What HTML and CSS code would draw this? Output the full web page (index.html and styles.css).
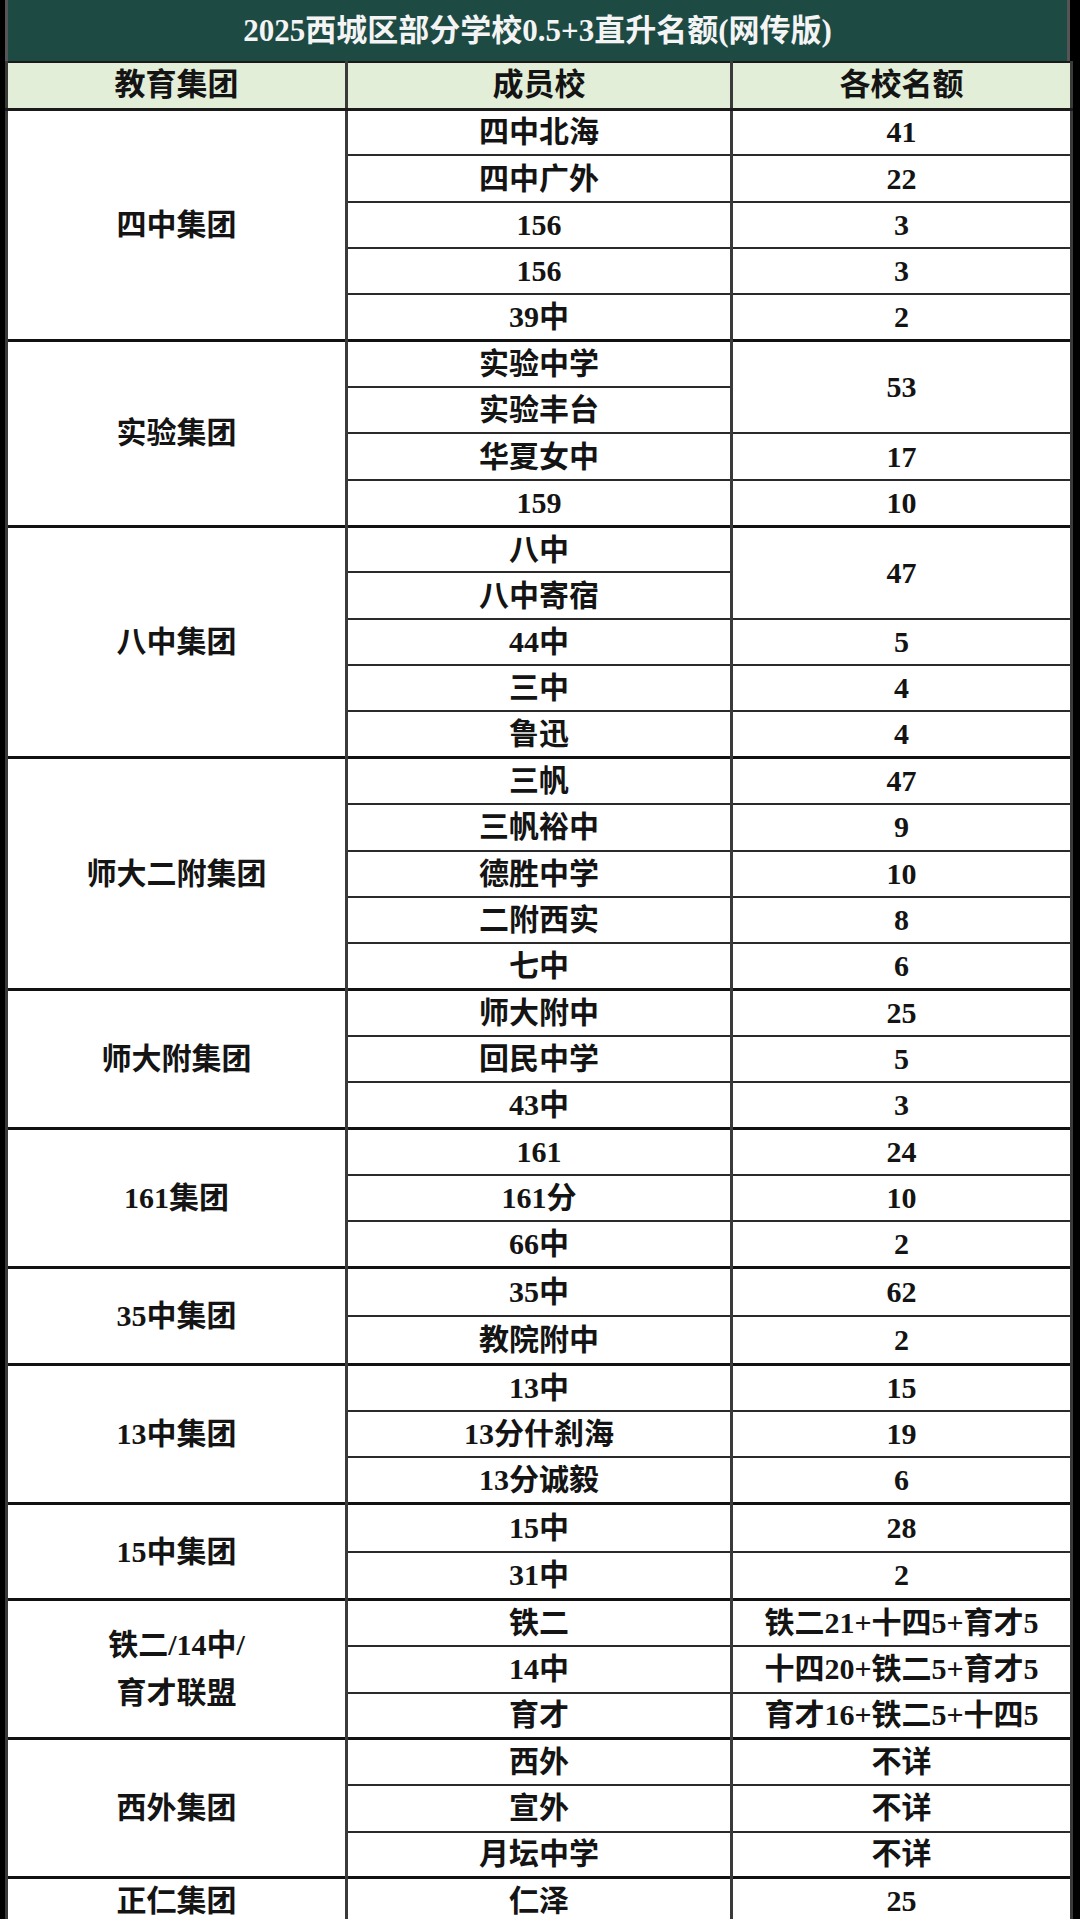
FILE: index.html
```html
<!DOCTYPE html>
<html lang="zh-CN">
<head>
<meta charset="utf-8">
<title>2025西城区部分学校0.5+3直升名额(网传版)</title>
<link rel="stylesheet" href="styles.css">
</head>
<body>
<div class="sheet">
  <div class="title">2025西城区部分学校0.5+3直升名额(网传版)</div>
  <table class="quota">
    <colgroup>
      <col class="c1"><col class="c2"><col class="c3">
    </colgroup>
    <thead>
      <tr class="head"><th>教育集团</th><th>成员校</th><th>各校名额</th></tr>
    </thead>
    <tbody>
      <tr class="g"><td rowspan="5">四中集团</td><td>四中北海</td><td>41</td></tr>
      <tr><td>四中广外</td><td>22</td></tr>
      <tr><td>156</td><td>3</td></tr>
      <tr><td>156</td><td>3</td></tr>
      <tr><td>39中</td><td>2</td></tr>

      <tr class="g"><td rowspan="4">实验集团</td><td>实验中学</td><td rowspan="2">53</td></tr>
      <tr><td>实验丰台</td></tr>
      <tr><td>华夏女中</td><td>17</td></tr>
      <tr><td>159</td><td>10</td></tr>

      <tr class="g"><td rowspan="5">八中集团</td><td>八中</td><td rowspan="2">47</td></tr>
      <tr><td>八中寄宿</td></tr>
      <tr><td>44中</td><td>5</td></tr>
      <tr><td>三中</td><td>4</td></tr>
      <tr><td>鲁迅</td><td>4</td></tr>

      <tr class="g"><td rowspan="5">师大二附集团</td><td>三帆</td><td>47</td></tr>
      <tr><td>三帆裕中</td><td>9</td></tr>
      <tr><td>德胜中学</td><td>10</td></tr>
      <tr><td>二附西实</td><td>8</td></tr>
      <tr><td>七中</td><td>6</td></tr>

      <tr class="g"><td rowspan="3">师大附集团</td><td>师大附中</td><td>25</td></tr>
      <tr><td>回民中学</td><td>5</td></tr>
      <tr><td>43中</td><td>3</td></tr>

      <tr class="g"><td rowspan="3">161集团</td><td>161</td><td>24</td></tr>
      <tr><td>161分</td><td>10</td></tr>
      <tr><td>66中</td><td>2</td></tr>

      <tr class="g tall"><td rowspan="2">35中集团</td><td>35中</td><td>62</td></tr>
      <tr class="tall"><td>教院附中</td><td>2</td></tr>

      <tr class="g"><td rowspan="3">13中集团</td><td>13中</td><td>15</td></tr>
      <tr><td>13分什刹海</td><td>19</td></tr>
      <tr><td>13分诚毅</td><td>6</td></tr>

      <tr class="g tall"><td rowspan="2">15中集团</td><td>15中</td><td>28</td></tr>
      <tr class="tall"><td>31中</td><td>2</td></tr>

      <tr class="g"><td rowspan="3" class="multi">铁二/14中/<br>育才联盟</td><td>铁二</td><td>铁二21+十四5+育才5</td></tr>
      <tr><td>14中</td><td>十四20+铁二5+育才5</td></tr>
      <tr><td>育才</td><td>育才16+铁二5+十四5</td></tr>

      <tr class="g"><td rowspan="3">西外集团</td><td>西外</td><td>不详</td></tr>
      <tr><td>宣外</td><td>不详</td></tr>
      <tr><td>月坛中学</td><td>不详</td></tr>

      <tr class="g"><td>正仁集团</td><td>仁泽</td><td>25</td></tr>
    </tbody>
  </table>
</div>
</body>
</html>
```
FILE: styles.css
```css
html, body {
  margin: 0;
  padding: 0;
  background: #000;
}
body {
  width: 1080px;
  height: 1919px;
  overflow: hidden;
}
.sheet {
  margin-left: 5px;
  width: 1065px;
  background: #fff;
  min-height: 1919px;
  font-family: "Liberation Serif", "Noto Sans CJK SC", serif;
  color: #141414;
}
.title {
  height: 61px;
  background: #1e4a44;
  color: #f4f4f4;
  font-size: 31px;
  font-weight: 700;
  line-height: 61px;
  text-align: center;
  box-sizing: border-box;
  border-left: 3px solid #555;
  border-right: 3px solid #555;
}
.quota {
  width: 1065px;
  border-collapse: collapse;
  table-layout: fixed;
}
.c1 { width: 340px; }
.c2 { width: 385px; }
.c3 { width: 340px; }
.quota th,
.quota td {
  border: 2px solid #2a2a2a;
  border-left: 3px solid #3a3a3a;
  border-right: 3px solid #3a3a3a;
  padding: 0;
  text-align: center;
  vertical-align: middle;
  font-size: 30px;
  font-weight: 700;
  line-height: 34px;
  white-space: nowrap;
}
.head th {
  background: #e3eed8;
  border-top: 2px solid #1a1a1a;
  border-bottom: 3px solid #1a1a1a;
  font-size: 31px;
}
.head { height: 47px; }
.quota tbody tr { height: 46.35px; }
.quota tbody tr.tall { height: 48.3px; }
.quota tr.g td { border-top: 3px solid #111; }
.quota td.multi { line-height: 48px; }
```
